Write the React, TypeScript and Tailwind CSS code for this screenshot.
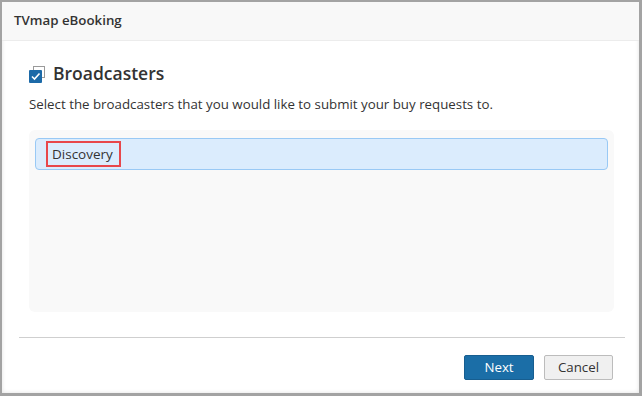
import React from "react";

export default function App() {
  return (
    <div
      className="w-[642px] h-[396px] bg-[#a3a3a3] pt-[2px] pl-[2px] pr-[3px] pb-[3px]"
      style={{ fontFamily: '"Open Sans", "Noto Sans", sans-serif' }}
    >
      <div className="w-full h-full bg-white flex flex-col shadow-[inset_0_0_4px_rgba(0,0,0,0.12)]">
        <div className="h-[39px] bg-[#f8f8f8] border-b border-[#ececec] flex items-center pl-[12px] text-[13.3px] font-semibold text-[#333]">
          TVmap eBooking
        </div>
        <div className="flex flex-col pl-[27px] pr-[25px] pt-[22px]">
          <div className="flex items-center gap-[7px] h-[22px]">
            <svg width="17" height="17" viewBox="0 0 17 17">
              <rect x="4.5" y="0.5" width="11" height="11" fill="white" stroke="#9a9a9a" strokeWidth="1" />
              <rect x="0" y="4" width="13" height="13" rx="1" fill="#1c6aa8" />
              <path d="M3 10.5 L5.5 13 L10.5 7.5" stroke="white" strokeWidth="1.6" fill="none" />
            </svg>
            <span className="text-[17.5px] font-semibold text-[#333] leading-none">Broadcasters</span>
          </div>
          <div className="mt-[10px] text-[13.3px] text-[#333] leading-[18px]">
            Select the broadcasters that you would like to submit your buy requests to.
          </div>
          <div className="mt-[17px] h-[182px] bg-[#f9f9f9] rounded-[6px] px-[6px] pt-[8px]">
            <div className="h-[32px] bg-[#dbecfd] border border-[#99c9f5] rounded-[4px] flex items-center pl-[10px]">
              <div className="border-2 border-[#e8474b] pl-[4px] pr-[6px] h-[26px] flex items-center text-[13.5px] text-[#333]">
                Discovery
              </div>
            </div>
          </div>
        </div>
        <div className="ml-[17px] mr-[14px] mt-[25px] border-t border-[#cfcfcf]" />
        <div className="flex justify-end gap-[10px] pr-[26px] mt-[17px]">
          <button className="w-[70px] h-[25px] bg-[#1b6ea7] border border-[#175e90] text-white text-[13.3px] rounded-[2px]">
            Next
          </button>
          <button className="w-[69px] h-[25px] bg-[#f0f0f0] border border-[#bcbcbc] text-[#333] text-[13.3px] rounded-[2px]">
            Cancel
          </button>
        </div>
      </div>
    </div>
  );
}
